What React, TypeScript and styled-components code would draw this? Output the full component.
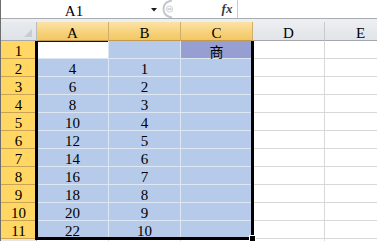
import React from 'react';
import styled, { createGlobalStyle } from 'styled-components';

const Global = createGlobalStyle`
  html, body { margin: 0; padding: 0; background: #fff; overflow: hidden; }
  #root { width: 377px; height: 241px; }
`;

const Window = styled.div`
  position: relative;
  width: 377px;
  height: 241px;
  overflow: hidden;
  box-sizing: border-box;
  border-left: 1px solid #6e6e6e;
  display: flex;
  flex-direction: column;
  font-family: "Liberation Serif", "Noto Sans CJK SC", serif;
  font-size: 15px;
  color: #000;
`;

const FormulaBar = styled.div`
  height: 19px;
  box-sizing: border-box;
  border-bottom: 1px solid #a9acb1;
  display: flex;
  flex-shrink: 0;
  background: #fff;
`;

const NameBox = styled.div`
  width: 146px;
  box-sizing: border-box;
  padding-top: 2px;
  line-height: 18px;
  text-align: center;
`;

const DropArrow = styled.div`
  width: 14px;
  display: flex;
  align-items: center;
  justify-content: center;
  padding-top: 2px;
`;

const Grip = styled.div`
  width: 56px;
  display: flex;
  align-items: stretch;
`;

const FxButton = styled.div`
  width: 21px;
  box-sizing: border-box;
  border-right: 1px solid #c8cbd0;
  font-family: "Liberation Serif", serif;
  font-style: italic;
  font-weight: bold;
  font-size: 13px;
  line-height: 18px;
  text-align: center;
  color: #3a3a3a;
`;

const FormulaInput = styled.div`
  flex: 1;
  background: #fff;
`;

const Gap = styled.div`
  height: 3px;
  flex-shrink: 0;
  background: #eceef1;
`;

const Sheet = styled.div`
  position: relative;
  display: grid;
  grid-template-columns: 36px repeat(5, 72px);
  grid-template-rows: 19px repeat(12, 18px);
`;

const Corner = styled.div`
  position: relative;
  box-sizing: border-box;
  background: linear-gradient(#e8eaee, #dfe2e7);
  border-right: 1px solid #b9bcc2;
  border-bottom: 1px solid #a4a8ae;
`;

const CornerMark = styled.svg`
  position: absolute;
  right: 4px;
  bottom: 3px;
`;

const ColHeader = styled.div<{ $sel?: boolean }>`
  box-sizing: border-box;
  text-align: center;
  line-height: 18px;
  padding-top: 2px;
  background: ${(p) =>
    p.$sel ? 'linear-gradient(#fbe3a6, #f7d27c 55%, #f3c663)' : 'linear-gradient(#eceef1, #e1e4e8)'};
  border-right: 1px solid ${(p) => (p.$sel ? '#d0ae6a' : '#c6c9ce')};
  border-bottom: 1px solid ${(p) => (p.$sel ? '#c39a4c' : '#a4a8ae')};
`;

const RowHeader = styled.div<{ $sel?: boolean }>`
  box-sizing: border-box;
  text-align: center;
  line-height: 18px;
  padding-top: 1px;
  background: ${(p) => (p.$sel ? '#ffd762' : '#e4e6ea')};
  border-right: 1px solid ${(p) => (p.$sel ? '#a47f33' : '#a4a8ae')};
  border-bottom: 1px solid ${(p) => (p.$sel ? '#c9a454' : '#c6c9ce')};
`;

const Cell = styled.div<{ $sel?: boolean; $fill?: string; $active?: boolean }>`
  box-sizing: border-box;
  text-align: center;
  line-height: 18px;
  padding-top: 1px;
  white-space: nowrap;
  background: ${(p) => p.$fill ?? (p.$sel ? '#b6cbe9' : '#fff')};
  border-right: 1px solid ${(p) => (p.$sel ? '#dde6f3' : '#d8d8d8')};
  border-bottom: 1px solid ${(p) => (p.$sel ? '#dde6f3' : '#d8d8d8')};
  box-shadow: ${(p) => (p.$active ? 'inset 0 1px 0 #111' : 'none')};
`;

const CjkText = styled.span`
  font-family: "Noto Sans CJK SC", sans-serif;
  font-size: 14px;
`;

const Selection = styled.div`
  position: absolute;
  left: 34px;
  top: 19px;
  width: 219px;
  height: 199px;
  box-sizing: border-box;
  border: 3px solid #000;
  border-top: none;
  pointer-events: none;
`;

const FillHandle = styled.div`
  position: absolute;
  right: -5px;
  bottom: -5px;
  width: 5px;
  height: 5px;
  background: #000;
  border: 1px solid #fff;
`;

const cols = ['A', 'B', 'C', 'D', 'E'];

type CellData = { text?: string; cjk?: boolean; fill?: string; active?: boolean };

const rows: CellData[][] = Array.from({ length: 12 }, (_, i) => {
  const r = i + 1;
  if (r === 1)
    return [{ fill: '#fff', active: true }, {}, { text: '商', cjk: true, fill: '#979fd2' }, {}, {}];
  if (r <= 11) return [{ text: String((r - 1) * 2 + 2) }, { text: String(r - 1) }, {}, {}, {}];
  return [{}, {}, {}, {}, {}];
});

export default function App() {
  return (
    <>
      <Global />
      <Window>
        <FormulaBar>
          <NameBox>A1</NameBox>
          <DropArrow>
            <svg width="6" height="4" viewBox="0 0 6 4">
              <path d="M0 0H6L3 3.5Z" fill="#1a1a1a" />
            </svg>
          </DropArrow>
          <Grip>
            <svg width="16" height="18" viewBox="0 0 16 18">
              <path d="M11 0.5 C5 1.5 2.5 5 2.5 9 C2.5 13 5 16.5 11 17.5" fill="none" stroke="#c4c8cd" strokeWidth="2" />
              <circle cx="8.5" cy="9" r="3.2" fill="#f4f5f6" stroke="#d4d7db" strokeWidth="1" />
              <path d="M6.5 9H10.5" stroke="#b8bcc2" strokeWidth="1" />
            </svg>
          </Grip>
          <FxButton>fx</FxButton>
          <FormulaInput />
        </FormulaBar>
        <Gap />
        <Sheet>
          <Corner>
            <CornerMark width="8" height="8" viewBox="0 0 8 8">
              <path d="M8 0V8H0Z" fill="#c9ccd1" />
            </CornerMark>
          </Corner>
          {cols.map((c, i) => (
            <ColHeader key={c} $sel={i < 3}>
              {c}
            </ColHeader>
          ))}
          {rows.map((row, ri) => (
            <React.Fragment key={ri}>
              <RowHeader $sel={ri < 11}>{ri < 11 ? ri + 1 : ''}</RowHeader>
              {row.map((cell, ci) => (
                <Cell key={ci} $sel={ri < 11 && ci < 3} $fill={cell.fill} $active={cell.active}>
                  {cell.cjk ? <CjkText>{cell.text}</CjkText> : cell.text}
                </Cell>
              ))}
            </React.Fragment>
          ))}
          <Selection>
            <FillHandle />
          </Selection>
        </Sheet>
      </Window>
    </>
  );
}
